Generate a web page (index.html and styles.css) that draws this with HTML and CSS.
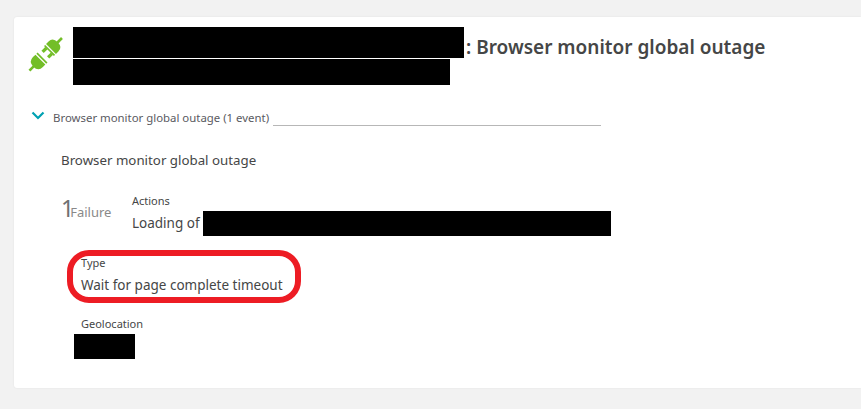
FILE: index.html
```html
<!DOCTYPE html>
<html lang="en">
<head>
    <meta charset="UTF-8">
    <meta name="viewport" content="width=device-width, initial-scale=1.0">
    <title>Browser monitor global outage</title>
    <link rel="stylesheet" href="styles.css">
</head>
<body>
    <div class="card">
        <div class="problem-header">
            <svg class="plug-icon" width="36" height="36" viewBox="0 0 36 36" aria-hidden="true">
                <g fill="#73be28" transform="translate(18 18) rotate(45)">
                    <!-- upper half of the plug -->
                    <rect x="-1.3" y="-24" width="2.6" height="7"/>
                    <path d="M-7 -8.5 V-12 Q-7 -18 0 -18 Q7 -18 7 -12 V-8.5 Z"/>
                    <rect x="-7" y="-7.3" width="14" height="1.7"/>
                    <rect x="-5.5" y="-6" width="3.2" height="5.5"/>
                    <rect x="2.3" y="-6" width="3.2" height="5.5"/>
                    <!-- lower half of the plug -->
                    <rect x="-7" y="3.5" width="14" height="1.7"/>
                    <path d="M-7 6.5 V10 Q-7 16.5 0 16.5 Q7 16.5 7 10 V6.5 Z"/>
                    <rect x="-1.3" y="15" width="2.6" height="7"/>
                </g>
            </svg>
            <div class="problem-title">
                <h1><span class="redacted title-line-1"></span>: Browser monitor global outage</h1>
                <span class="redacted title-line-2"></span>
            </div>
        </div>

        <div class="event-group">
            <svg class="chevron" width="14" height="9" viewBox="0 0 14 9" aria-hidden="true">
                <path d="M1.5 1.5 L7 7 L12.5 1.5" fill="none" stroke="#00a1b2" stroke-width="2.2"/>
            </svg>
            <span class="event-group-label">Browser monitor global outage (1 event)</span>
            <span class="event-group-rule"></span>
        </div>

        <div class="event-details">
            <p class="event-name">Browser monitor global outage</p>

            <div class="failure-row">
                <div class="failure-count"><span class="count">1</span><span class="count-label">Failure</span></div>
                <div class="field">
                    <div class="field-label">Actions</div>
                    <div class="field-value">Loading of <span class="redacted action-name"></span></div>
                </div>
            </div>

            <div class="field type-field">
                <div class="field-label">Type</div>
                <div class="field-value">Wait for page complete timeout</div>
                <div class="highlight-ring"></div>
            </div>

            <div class="field geo-field">
                <div class="field-label">Geolocation</div>
                <span class="redacted geo-name"></span>
            </div>
        </div>
    </div>
</body>
</html>
```
FILE: styles.css
```css
html, body {
    height: 100%;
}
body {
    font-family: 'Noto Sans', 'Open Sans', sans-serif;
    color: #454646;
    margin: 0;
    padding: 17px 0 0 14px;
    box-sizing: border-box;
    background-color: #f2f2f2;
    overflow: hidden;
}
.card {
    background-color: white;
    border-radius: 3px 0 0 3px;
    height: 371px;
    padding: 10px 0 0 15px;
    box-sizing: border-box;
    box-shadow: 0 0 2px rgba(0, 0, 0, 0.08);
}
.redacted {
    display: inline-block;
    background-color: black;
}
.problem-header {
    display: flex;
    gap: 10px;
}
.plug-icon {
    margin-top: 10px;
    margin-left: -2px;
    flex: none;
}
.problem-title {
    display: flex;
    flex-direction: column;
    gap: 1px;
}
h1 {
    display: flex;
    align-items: flex-start;
    margin: 0;
    font-size: 19px;
    font-weight: 600;
    line-height: 40px;
    height: 31px;
}
.title-line-1 {
    width: 391px;
    height: 31px;
    margin-right: 2px;
}
.title-line-2 {
    width: 377px;
    height: 26px;
}
.event-group {
    display: flex;
    align-items: center;
    margin-top: 23px;
    padding-left: 2px;
    height: 18px;
}
.chevron {
    flex: none;
    margin-top: -3px;
}
.event-group-label {
    margin-left: 8px;
    font-size: 11.4px;
    color: #5a5a5f;
}
.event-group-rule {
    width: 328px;
    margin-left: 4px;
    margin-top: 16px;
    border-top: 1px solid #b7b7b7;
}
.event-details {
    padding-left: 32px;
}
.event-name {
    margin: 25px 0 0;
    font-size: 13.3px;
    line-height: 18px;
}
.failure-row {
    display: flex;
    margin-top: 25px;
}
.failure-count {
    width: 71px;
    padding-top: 1px;
}
.count {
    font-size: 23px;
    line-height: 26px;
    letter-spacing: -4px;
    color: #6f7071;
}
.count-label {
    font-size: 13px;
    color: #898989;
}
.field-label {
    font-size: 11px;
    line-height: 14px;
    margin-bottom: 3px;
}
.field-value {
    display: flex;
    align-items: center;
    gap: 3px;
    font-size: 13.5px;
    line-height: 25px;
}
.action-name {
    width: 408px;
    height: 25px;
}
.type-field {
    position: relative;
    margin: 20px 0 0 20px;
    width: 230px;
}
.highlight-ring {
    position: absolute;
    left: -14px;
    top: -6px;
    width: 234px;
    height: 53px;
    box-sizing: border-box;
    border: 6px solid #ed1c24;
    border-radius: 22px;
}
.geo-field {
    margin: 19px 0 0 20px;
}
.geo-name {
    display: block;
    width: 61px;
    height: 25px;
    margin-left: -7px;
    margin-top: 0;
}
```
